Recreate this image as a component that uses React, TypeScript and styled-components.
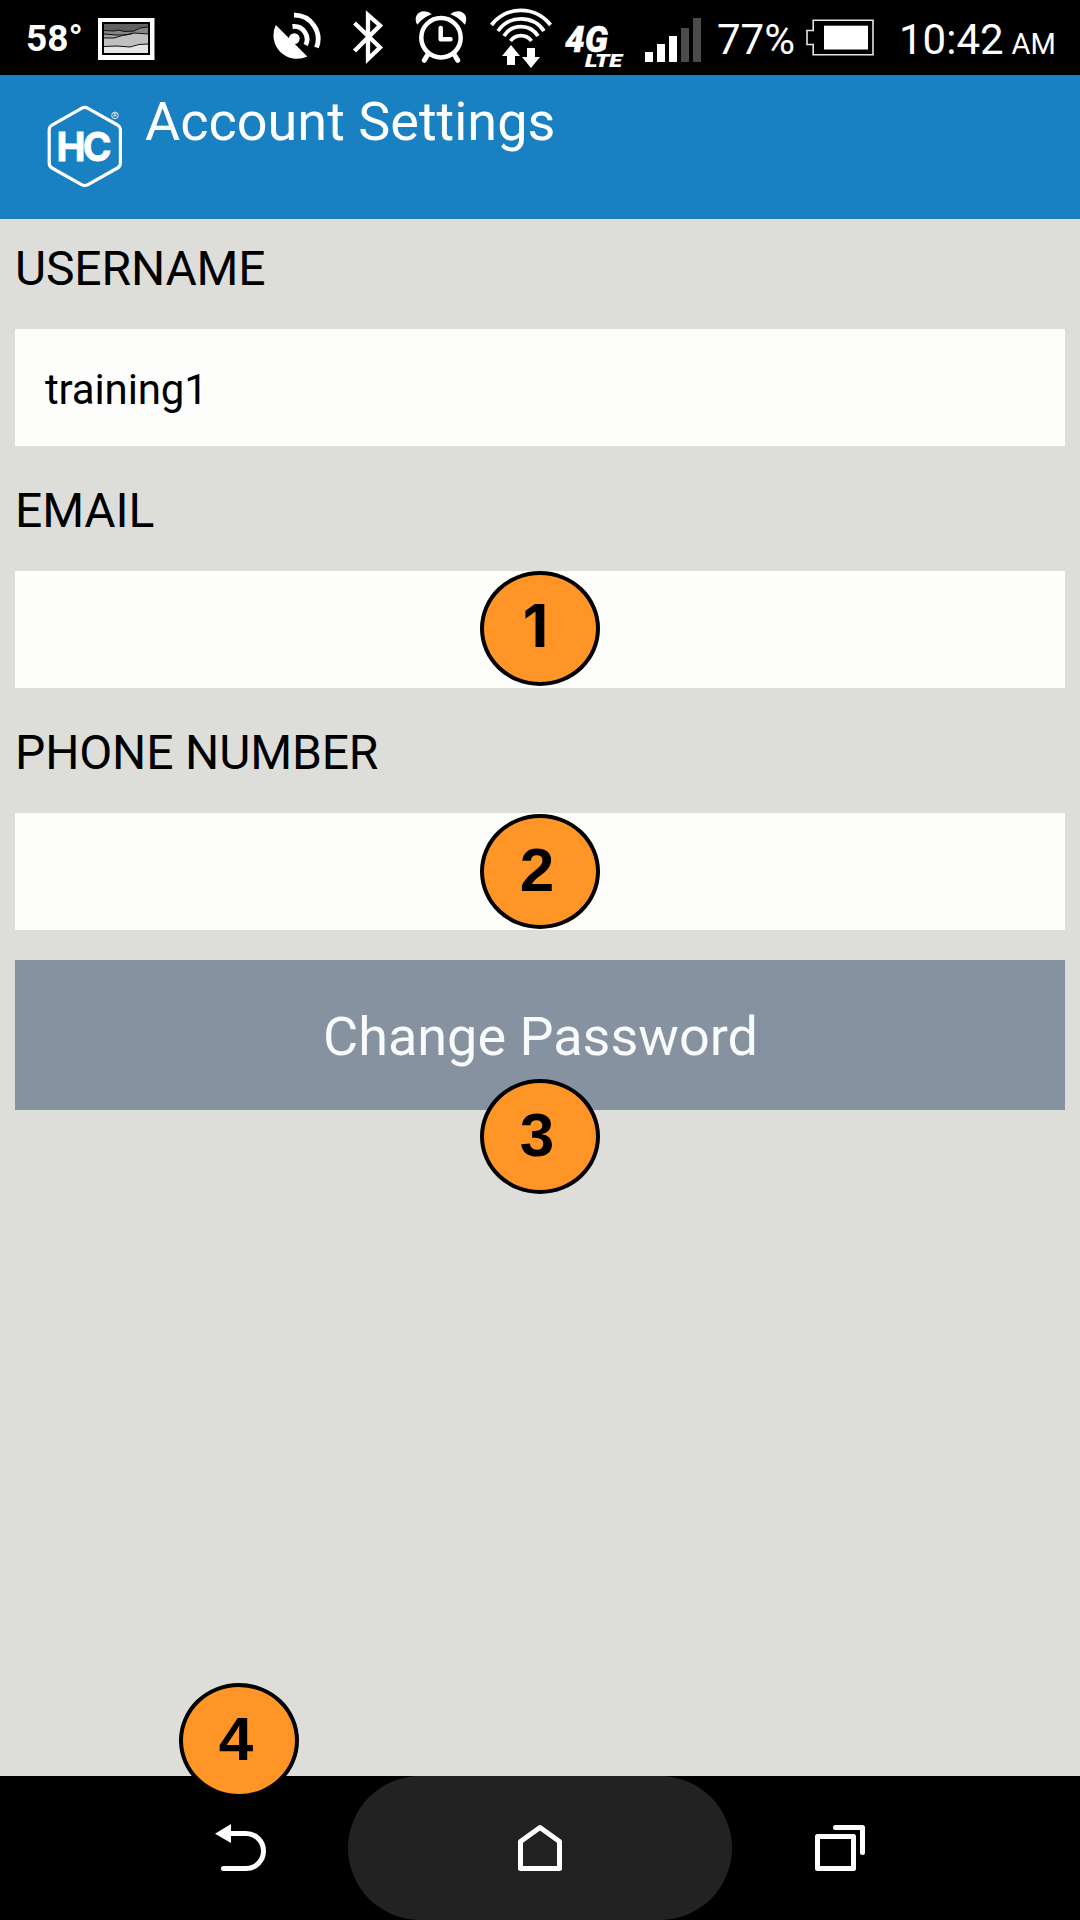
import React from "react";
import styled, { createGlobalStyle } from "styled-components";

const GlobalStyle = createGlobalStyle`
  * { box-sizing: border-box; }
  body { margin: 0; background: #000; }
`;

const Screen = styled.div`
  width: 1080px;
  height: 1920px;
  display: flex;
  flex-direction: column;
  overflow: hidden;
  background: #dddeda;
  font-family: Roboto, "Liberation Sans", sans-serif;
  color: #000;
`;

const StatusBar = styled.div`
  height: 75px;
  flex: none;
  display: flex;
  background: #000;
  color: #fff;
  white-space: nowrap;
`;

const Temperature = styled.span`
  width: 98px;
  padding-left: 26px;
  font-size: 37px;
  font-weight: 700;
  line-height: 77px;
`;

const StatusIcon = styled.svg<{ $gap?: number }>`
  flex: none;
  display: block;
  height: 75px;
  margin-left: ${(p) => p.$gap ?? 0}px;
`;

const Percent = styled.span`
  width: 88px;
  font-size: 42px;
  line-height: 79px;
`;

const Clock = styled.span`
  padding-left: 24px;
  font-size: 42px;
  line-height: 79px;
`;

const Meridiem = styled.span`
  font-size: 29px;
  margin-left: 8px;
`;

const Header = styled.header`
  height: 144px;
  flex: none;
  display: flex;
  background: #1981c2;
  color: #fff;
`;

const Logo = styled.svg`
  width: 80px;
  height: 90px;
  margin: 27px 0 0 45px;
`;

const Title = styled.h1`
  margin: 14px 0 0 20px;
  font-size: 54px;
  line-height: 65px;
  font-weight: 400;
  white-space: nowrap;
`;

const Form = styled.main`
  flex: 1;
  display: flex;
  flex-direction: column;
  gap: 15px;
  padding: 0 15px;
`;

const Group = styled.div`
  display: flex;
  flex-direction: column;
  gap: 11px;
`;

const Label = styled.label`
  font-size: 48px;
  line-height: 99px;
  letter-spacing: -0.15px;
`;

const Field = styled.div`
  position: relative;
  height: 117px;
  padding-left: 30px;
  background: #fdfefc;
  font-size: 42px;
  line-height: 121px;
  letter-spacing: -0.15px;
`;

const Button = styled.div`
  position: relative;
  height: 150px;
  margin-top: 15px;
  padding-left: 1px;
  background: #8792a0;
  color: #f8fafc;
  font-size: 54px;
  line-height: 153px;
  text-align: center;
`;

const Marker = styled.span<{ $left: number; $top: number }>`
  position: absolute;
  z-index: 2;
  left: ${(p) => p.$left}px;
  top: ${(p) => p.$top}px;
  width: 120px;
  height: 115px;
  padding-right: 6px;
  border: 4px solid #000;
  border-radius: 50%;
  background: #ff9427;
  color: #000;
  font-family: "Liberation Sans", Arial, sans-serif;
  font-size: 62px;
  font-weight: 700;
  line-height: 103px;
  letter-spacing: 0;
  text-align: center;
`;

const FirstMarker = styled(Marker)`
  padding-right: 9px;
  font-family: Inter, sans-serif;
  font-size: 59px;
  line-height: 101px;
`;

const NavBar = styled.nav`
  position: relative;
  height: 144px;
  flex: none;
  display: flex;
  justify-content: center;
  background: #000;
`;

const NavButton = styled.div<{ $active?: boolean }>`
  width: ${(p) => (p.$active ? 384 : 348)}px;
  height: 144px;
  display: flex;
  align-items: center;
  justify-content: center;
  border-radius: 72px;
  background: ${(p) => (p.$active ? "#222" : "transparent")};
`;

const NavIcon = styled.svg<{ $shift?: number }>`
  width: 60px;
  height: 60px;
  margin-left: ${(p) => p.$shift ?? 0}px;
  fill: none;
  stroke: #fff;
  stroke-width: 5;
  stroke-linecap: round;
  stroke-linejoin: round;
`;

function PictureIcon() {
  return (
    <StatusIcon width={57} viewBox="98 0 57 75">
      <rect x="98" y="18" width="56.5" height="42" fill="#fff" />
      <rect x="102" y="22" width="48" height="33" fill="#000" />
      <path d="M104 24H148V53H104Z" fill="#606060" />
      <path d="M104 30L114 31L125 31L134 31L140 28L148 27V53H104Z" fill="#858585" />
      <path d="M104 34L117 35L126 35L138 33L148 34V53H104Z" fill="#a0a0a0" />
      <path d="M104 38L115 38L124 35L133 33L148 34V53H104Z" fill="#c0c0c0" />
      <path d="M104 46L130 47L138 44L148 44V53H104Z" fill="#e6e6e6" />
      <path
        d="M104 30.5L114 31L118 30L125 31.5L134 31L140 28L148 27M104 34L117 35L126 35L134 33L148 34M104 38H114L124 35L133 33.5M104 46.5L117 46L130 47L139 44.5L148 44"
        fill="none"
        stroke="#111"
        strokeWidth="1"
      />
    </StatusIcon>
  );
}

function SatelliteIcon() {
  return (
    <StatusIcon width={52} viewBox="271 0 52 75" $gap={116}>
      <path d="M275.8 25L307.3 56.5A23.6 23.6 0 0 1 275.8 25Z" fill="#fff" />
      <circle cx="294.3" cy="38.6" r="5.4" fill="#fff" />
      <path
        d="M294 15.2A23.8 23.8 0 0 1 316.5 47.5M292.5 26.5A12.9 12.9 0 0 1 305.7 45"
        fill="none"
        stroke="#fff"
        strokeWidth="4.8"
      />
    </StatusIcon>
  );
}

function BluetoothIcon() {
  return (
    <StatusIcon width={36} viewBox="350 0 36 75" $gap={27}>
      <path
        d="M354.5 23L380 47.5L368 59V15L380 25.5L354.5 51"
        fill="none"
        stroke="#fff"
        strokeWidth="4.3"
      />
    </StatusIcon>
  );
}

function AlarmIcon() {
  return (
    <StatusIcon width={56} viewBox="413 0 56 75" $gap={27}>
      <g fill="none" stroke="#fff" strokeWidth="4.5" strokeLinecap="round">
        <circle cx="441" cy="37.7" r="19.7" />
        <path d="M440.7 28V39.3H450.5" strokeLinejoin="round" />
        <path d="M427.5 55L424.3 60.3M454.5 55L457.7 60.3" strokeWidth="5" />
      </g>
      <path
        d="M417.2 24.8C413.5 18 417 11.2 424 11.2Q428.5 11.2 431.8 14.2Q423 17 417.2 24.8ZM464.8 24.8C468.5 18 465 11.2 458 11.2Q453.5 11.2 450.2 14.2Q459 17 464.8 24.8Z"
        fill="#fff"
      />
    </StatusIcon>
  );
}

function WifiIcon() {
  return (
    <StatusIcon width={66} viewBox="488 0 66 75" $gap={19}>
      <path
        d="M491.5 25A37 37 0 0 1 550.5 25M498 31A28 28 0 0 1 544 31M504 36A20 20 0 0 1 538 36M510.5 41A13 13 0 0 1 531.5 41"
        fill="none"
        stroke="#fff"
        strokeWidth="3.8"
      />
      <path
        d="M511 45L520 56H515V65H507V56H502ZM527 48H535V57H540L531 68L522 57H527Z"
        fill="#fff"
      />
    </StatusIcon>
  );
}

function NetworkIcon() {
  return (
    <StatusIcon width={66} viewBox="562 0 66 75" $gap={8}>
      <g
        fill="#fff"
        stroke="#fff"
        fontFamily="Roboto, sans-serif"
        fontWeight="900"
        fontStyle="italic"
      >
        <text x="565" y="51.5" fontSize="37" strokeWidth="0.4" textLength="43" lengthAdjust="spacingAndGlyphs">
          4G
        </text>
        <text x="585" y="66.5" fontSize="18" strokeWidth="0.2" textLength="37" lengthAdjust="spacingAndGlyphs">
          LTE
        </text>
      </g>
    </StatusIcon>
  );
}

function SignalIcon() {
  return (
    <StatusIcon width={56} viewBox="645 0 56 75" $gap={17}>
      <path d="M645 52H653V62H645ZM657 44H665V62H657ZM669 36H677V62H669Z" fill="#fff" />
      <path d="M681 28H689V62H681ZM693 18H701V62H693Z" fill="#4b4b4b" />
    </StatusIcon>
  );
}

function BatteryIcon() {
  return (
    <StatusIcon width={70} viewBox="805 0 70 75">
      <path
        d="M813.2 20.2H873V54.8H813.2V44.5H807V30.5H813.2Z"
        fill="none"
        stroke="#e8e4e6"
        strokeWidth="1.6"
      />
      <rect x="824" y="25.7" width="44" height="23.8" fill="#fff" />
    </StatusIcon>
  );
}

function HexLogo() {
  return (
    <Logo viewBox="45 102 80 90">
      <path
        d="M81.5 108.3Q84.7 106.6 88 108.3L117.5 125Q120.4 126.8 120.4 130V163Q120.4 166.3 117.5 168L88 184.7Q84.7 186.5 81.5 184.7L52 168Q49.2 166.3 49.2 163V130Q49.2 126.8 52 125Z"
        fill="none"
        stroke="#fff"
        strokeWidth="3.2"
      />
      <text
        x="56.5"
        y="161.3"
        fill="#fff"
        stroke="#fff"
        strokeWidth="0.8"
        fontFamily="Inter, sans-serif"
        fontWeight="700"
        fontSize="40"
        letterSpacing="-3"
        textLength="52"
        lengthAdjust="spacingAndGlyphs"
      >
        HC
      </text>
      <circle cx="115" cy="115.4" r="3.3" fill="none" stroke="#fff" strokeWidth="0.8" />
      <text x="113.2" y="117.4" fontSize="5.4" fontFamily="Roboto, sans-serif" fill="#fff">
        R
      </text>
    </Logo>
  );
}

export default function App() {
  return (
    <Screen>
      <GlobalStyle />
      <StatusBar>
        <Temperature>58°</Temperature>
        <PictureIcon />
        <SatelliteIcon />
        <BluetoothIcon />
        <AlarmIcon />
        <WifiIcon />
        <NetworkIcon />
        <SignalIcon />
        <StatusIcon width={16} viewBox="0 0 16 75" />
        <Percent>77%</Percent>
        <BatteryIcon />
        <Clock>
          10:42<Meridiem>AM</Meridiem>
        </Clock>
      </StatusBar>
      <Header>
        <HexLogo />
        <Title>Account Settings</Title>
      </Header>
      <Form>
        <Group>
          <Label>USERNAME</Label>
          <Field>training1</Field>
        </Group>
        <Group>
          <Label>EMAIL</Label>
          <Field>
            <FirstMarker $left={465} $top={0}>
              1
            </FirstMarker>
          </Field>
        </Group>
        <Group>
          <Label>PHONE NUMBER</Label>
          <Field>
            <Marker $left={465} $top={1}>
              2
            </Marker>
          </Field>
        </Group>
        <Button>
          Change Password
          <Marker $left={465} $top={119}>
            3
          </Marker>
        </Button>
      </Form>
      <NavBar>
        <Marker $left={179} $top={-93}>
          4
        </Marker>
        <NavButton>
          <NavIcon viewBox="211 1818 60 60" $shift={134}>
            <path d="M230 1833.5H246A17.5 17.5 0 0 1 246 1868.5H223.5" />
            <path d="M215 1833.7L231 1824V1843Z" fill="#fff" stroke="none" />
          </NavIcon>
        </NavButton>
        <NavButton $active>
          <NavIcon viewBox="510 1818 60 60">
            <path d="M520.5 1841.5L540 1827.5L559.5 1841.5V1868.5H520.5Z" />
          </NavIcon>
        </NavButton>
        <NavButton>
          <NavIcon viewBox="809 1818 60 60" $shift={-134}>
            <path d="M817.5 1836.5H853.5V1868.5H817.5ZM835.5 1827.5H862.5V1852.5" />
          </NavIcon>
        </NavButton>
      </NavBar>
    </Screen>
  );
}
